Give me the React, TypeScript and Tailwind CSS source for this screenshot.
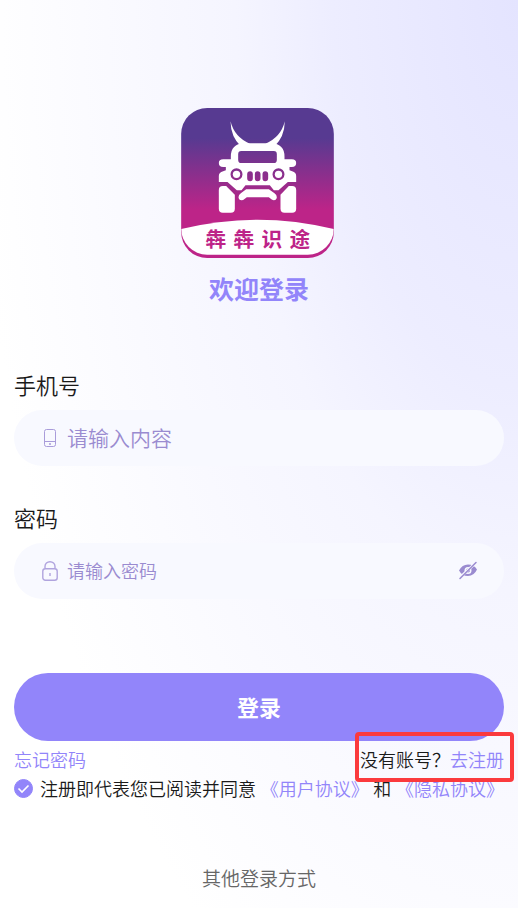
import React, { useState } from "react"

function Logo(): React.JSX.Element {
  return (
    <svg className="w-[153px] h-[150px] mr-1" viewBox="34 24 458 450" role="img" aria-label="犇犇识途">
      <defs>
        <linearGradient id="logo-bg" x1="0" y1="0" x2="0" y2="1">
          <stop offset="0.2" stopColor="#573a91" />
          <stop offset="0.68" stopColor="#bd2488" />
        </linearGradient>
        <clipPath id="logo-clip">
          <rect x="34" y="24" width="458" height="440" rx="78" />
        </clipPath>
      </defs>
      <rect x="34" y="24" width="458" height="450" rx="78" fill="url(#logo-bg)" />
      <path d="M34 387Q263 331 492 387V466H34Z" fill="#fff" clipPath="url(#logo-clip)" />
      <g fill="#fff">
        <path d="M182 64Q194 112 240 131L214 140Q183 112 182 64Z" />
        <path d="M345 64Q333 112 287 131L313 140Q344 112 345 64Z" />
        <path
          fillRule="evenodd"
          d="M222 130H305Q344 132 344 170V178H366Q379 178 379 189Q379 201 366 201H359V211L367 214Q379 217 379 228V246H354L326 271H312L300 256H227L215 271H201L173 246H147V228Q147 217 160 214L168 211V201H160Q147 201 147 189Q147 178 160 178H183V170Q183 132 222 130ZM214 153Q205 153 205 163V179Q205 189 214 189H312Q321 189 321 179V163Q321 153 312 153ZM200 205A18 18 0 1 0 200 241A18 18 0 1 0 200 205ZM326 205A18 18 0 1 0 326 241A18 18 0 1 0 326 205ZM241 214Q232 214 232 223V235Q232 244 241 244Q249 244 249 235V223Q249 214 241 214ZM263 214Q255 214 255 223V235Q255 244 263 244Q272 244 272 235V223Q272 214 263 214ZM286 214Q278 214 278 223V235Q278 244 286 244Q295 244 295 235V223Q295 214 286 214Z"
        />
        <circle cx="200" cy="223" r="11" />
        <circle cx="326" cy="223" r="11" />
        <path d="M159 258H169L195 284V326Q195 338 183 338H159Q147 338 147 326V270Q147 258 159 258Z" />
        <path d="M367 258H357L332 284V326Q332 338 344 338H367Q379 338 379 326V270Q379 258 367 258Z" />
        <path d="M229 268H297L314 280Q321 284 321 292Q320 301 312 301Q307 301 297 292H231Q221 301 215 301Q207 301 206 292Q206 284 213 280Z" />
      </g>
      {["犇", "犇", "识", "途"].map((char, i) => (
        <text
          key={i}
          x={138 + i * 84}
          y="441"
          textAnchor="middle"
          fill="#bd2488"
          className="text-[62px] font-bold"
        >
          {char}
        </text>
      ))}
    </svg>
  )
}

function PhoneIcon(): React.JSX.Element {
  return (
    <svg className="w-4 h-5" viewBox="0 0 16 20" fill="none" stroke="#a99cda" aria-hidden="true">
      <rect x="2.5" y="1.5" width="11" height="17" rx="2" />
      <path d="M2.5 13.5H13.5" />
      <circle cx="8" cy="16" r="0.6" fill="#a99cda" />
    </svg>
  )
}

function LockIcon(): React.JSX.Element {
  return (
    <svg className="w-4 h-5" viewBox="0 0 16 20" fill="none" stroke="#b0a4de" strokeWidth="1.4" aria-hidden="true">
      <rect x="0.8" y="7.7" width="14.4" height="11.5" rx="2.5" />
      <path d="M3 7.5V5.5A5 4.8 0 0 1 13 5.5V7.5M8 12V15" />
    </svg>
  )
}

function EyeOffIcon(): React.JSX.Element {
  return (
    <svg className="w-5 h-5" viewBox="0 0 20 20" aria-hidden="true">
      <path
        fill="#9a8bd0"
        fillRule="evenodd"
        d="M1 9.500Q4 3.500 10 3.500Q16 3.500 19 8.500Q16 15 10 15Q4 15 1 9.500ZM10 6A3.500 3.500 0 1 0 10 13A3.500 3.500 0 1 0 10 6Z"
      />
      <circle cx="10" cy="9.500" r="2" fill="#9a8bd0" />
      <path d="M3 15.500L17 2.500" stroke="#f9faff" strokeWidth="2.600" />
      <path d="M2 17.500L18 1.500" stroke="#9a8bd0" strokeWidth="1.500" strokeLinecap="round" />
    </svg>
  )
}

interface FieldProps {
  id: string
  label: string
  children: React.ReactNode
}

function Field({ id, label, children }: FieldProps): React.JSX.Element {
  return (
    <div className="flex flex-col gap-3">
      <label htmlFor={id} className="text-[22px] leading-7 text-[#1a1a1a]">
        {label}
      </label>
      <div className="flex items-center h-14 rounded-full bg-[#f8f9ff] pl-7 pr-[26px] gap-[9px]">{children}</div>
    </div>
  )
}

export default function App(): React.JSX.Element {
  const [agreed, setAgreed] = useState(true)
  const [visible, setVisible] = useState(false)

  return (
    <main className="min-h-screen bg-white bg-[radial-gradient(ellipse_105%_125%_at_100%_0%,#e4e4ff_0%,#ededff_34%,#f5f5ff_52%,#fcfcff_85%,#ffffff_100%)] px-3.5 pt-[108px] pb-3 font-['Noto_Sans_CJK_SC',sans-serif] font-[350] text-lg leading-7 text-[#1a1a1a]">
      <div className="flex flex-col items-center gap-3">
        <Logo />
        <h1 className="text-[25px] leading-9 font-bold text-[#9285fa]">欢迎登录</h1>
      </div>

      <form className="flex flex-col mt-16" onSubmit={(e) => e.preventDefault()}>
        <div className="flex flex-col gap-[37px]">
          <Field id="phone" label="手机号">
            <PhoneIcon />
            <input
              id="phone"
              type="tel"
              placeholder="请输入内容"
              className="flex-1 min-w-0 bg-transparent pb-0.5 text-[21px] leading-8 outline-none placeholder:text-[#9a8bd0]"
            />
          </Field>
          <Field id="password" label="密码">
            <LockIcon />
            <input
              id="password"
              type={visible ? "text" : "password"}
              placeholder="请输入密码"
              className="flex-1 min-w-0 bg-transparent pb-0.5 outline-none placeholder:text-[#9a8bd0]"
            />
            <button type="button" aria-label="显示密码" onClick={() => setVisible(!visible)}>
              <EyeOffIcon />
            </button>
          </Field>
        </div>

        <button
          type="submit"
          className="mt-[74px] h-[68px] rounded-full bg-[#9285fa] pb-0.5 text-[22px] font-bold text-white"
        >
          登录
        </button>

        <div className="relative flex justify-between mt-1">
          <a href="#forgot" className="text-[#9285fa]">
            忘记密码
          </a>
          <p>
            没有账号？
            <a href="#register" className="text-[#9285fa]">
              去注册
            </a>
          </p>
          <div className="absolute -top-[13px] -right-2.5 w-[159px] h-[50px] rounded-sm border-4 border-[#fb3a3d] pointer-events-none" />
        </div>

        <div className="flex items-center justify-between mt-px whitespace-nowrap">
          <label className="flex items-center gap-[7px]">
            <span className="relative flex w-[19px] h-[19px]">
              <input
                type="checkbox"
                checked={agreed}
                onChange={(e) => setAgreed(e.target.checked)}
                className="w-full h-full appearance-none rounded-full border border-[#9285fa] checked:bg-[#9285fa]"
              />
              {agreed && (
                <svg className="absolute inset-0 pointer-events-none" viewBox="0 0 19 19" aria-hidden="true">
                  <path d="M4.500 9.500L8 13L14.500 6.500" fill="none" stroke="#fff" strokeWidth="1.600" />
                </svg>
              )}
            </span>
            注册即代表您已阅读并同意
          </label>
          <a href="#terms" className="text-[#9285fa]">
            《用户协议》
          </a>
          <span>和</span>
          <a href="#privacy" className="text-[#9285fa]">
            《隐私协议》
          </a>
        </div>
      </form>

      <p className="mt-[62px] text-center text-[19px] text-[#666666]">其他登录方式</p>
    </main>
  )
}
